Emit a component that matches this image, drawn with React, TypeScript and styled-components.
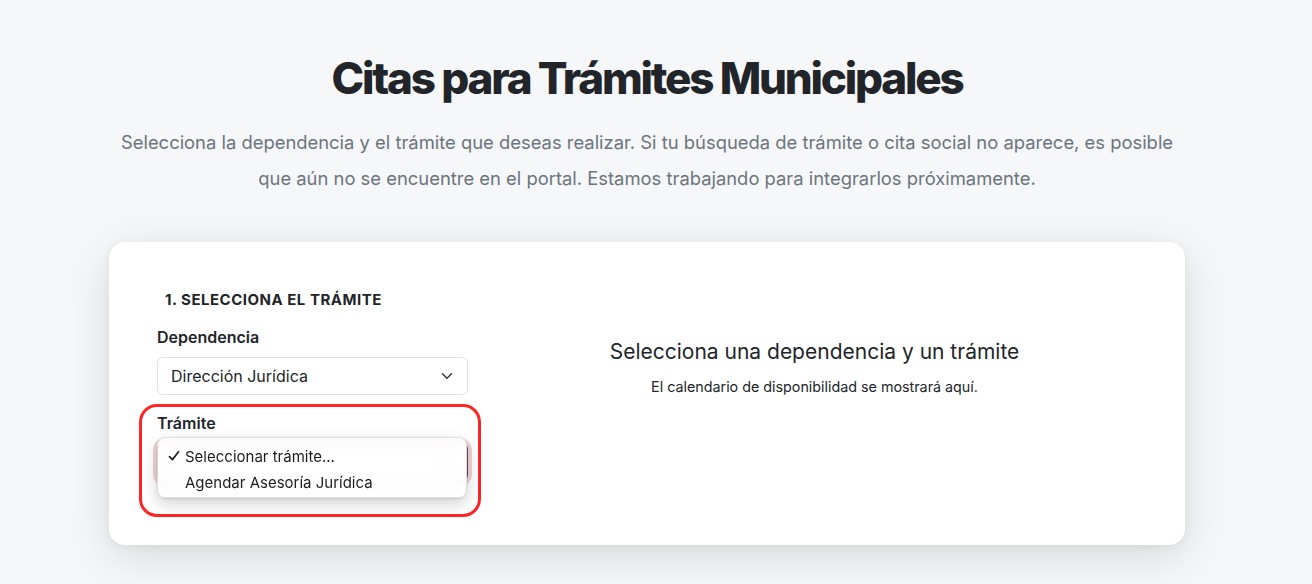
import React from "react";
import styled, { createGlobalStyle } from "styled-components";

const GlobalStyle = createGlobalStyle`
  html, body {
    margin: 0;
    padding: 0;
    background: #f6f7f9;
    font-family: Inter, "Noto Sans", "Liberation Sans", sans-serif;
    color: #212529;
  }
  * {
    box-sizing: border-box;
  }
`;

const Chevron: React.FC = () => (
  <svg width="16" height="12" viewBox="0 0 16 16" fill="none">
    <path
      d="m2 5 6 6 6-6"
      stroke="#343a40"
      strokeWidth="2"
      strokeLinecap="round"
      strokeLinejoin="round"
    />
  </svg>
);

const Check: React.FC = () => (
  <svg width="12" height="12" viewBox="0 0 12 12" fill="none">
    <path
      d="M1.5 6.6 4.4 9.6 10.6 1.8"
      stroke="#1d1d1f"
      strokeWidth="1.7"
      strokeLinecap="round"
      strokeLinejoin="round"
    />
  </svg>
);

const App: React.FC = () => {
  return (
    <Page>
      <GlobalStyle />
      <Title>Citas para Trámites Municipales</Title>
      <Lead>
        Selecciona la dependencia y el trámite que deseas realizar. Si tu
        búsqueda de trámite o cita social no aparece, es posible que aún no se
        encuentre en el portal. Estamos trabajando para integrarlos
        próximamente.
      </Lead>

      <Card>
        <FormCol>
          <StepTitle>1. Selecciona el trámite</StepTitle>
          <Field>
            <Label>Dependencia</Label>
            <Select>
              <span>Dirección Jurídica</span>
              <Chevron />
            </Select>
          </Field>
          <Field>
            <Label>Trámite</Label>
            <Select $focused>
              <Chevron />
            </Select>
            <Menu>
              <MenuItem>
                <CheckMark>
                  <Check />
                </CheckMark>
                Seleccionar trámite...
              </MenuItem>
              <MenuItem>Agendar Asesoría Jurídica</MenuItem>
            </Menu>
            <Highlight />
          </Field>
        </FormCol>

        <Placeholder>
          <PlaceholderTitle>Selecciona una dependencia y un trámite</PlaceholderTitle>
          <PlaceholderText>
            El calendario de disponibilidad se mostrará aquí.
          </PlaceholderText>
        </Placeholder>
      </Card>
    </Page>
  );
};

export default App;

// Styles
const Page = styled.div`
  min-height: 584px;
  padding: 52px 18px 40px 0;
  display: flex;
  flex-direction: column;
  align-items: center;
`;

const Title = styled.h1`
  margin: 0 0 19px;
  font-size: 44px;
  line-height: 53px;
  font-weight: 800;
  letter-spacing: -0.05em;
  color: #212529;
  text-align: center;
`;

const Lead = styled.p`
  margin: 0 0 46px;
  max-width: 1070px;
  font-size: 18.4px;
  line-height: 36px;
  font-weight: 400;
  color: #6c757d;
  text-align: center;
`;

const Card = styled.div`
  width: 1076px;
  background: #fff;
  border-radius: 16px;
  box-shadow: 0 12px 48px rgba(0, 0, 0, 0.12), 0 2px 10px rgba(0, 0, 0, 0.05);
  padding: 48px;
  display: flex;
  gap: 24px;
`;

const FormCol = styled.div`
  width: 311px;
  flex-shrink: 0;
  display: flex;
  flex-direction: column;
`;

const StepTitle = styled.h6`
  margin: 0 0 15px;
  padding-left: 8px;
  font-size: 15px;
  line-height: 20px;
  font-weight: 700;
  letter-spacing: 0.5px;
  text-transform: uppercase;
  color: #212529;
`;

const Field = styled.div`
  position: relative;
  margin-bottom: 16px;
`;

const Label = styled.div`
  margin-bottom: 8px;
  font-size: 16px;
  line-height: 24px;
  font-weight: 600;
  color: #212529;
`;

const Select = styled.div<{ $focused?: boolean }>`
  height: 38px;
  display: flex;
  align-items: center;
  justify-content: space-between;
  padding: 0 12px 0 13px;
  border: 1px solid ${({ $focused }) => ($focused ? "#7a4a4a" : "#dee2e6")};
  border-radius: 6px;
  font-size: 16px;
  color: #212529;
  background: #fff;
  box-shadow: ${({ $focused }) =>
    $focused ? "0 0 0 4px rgba(190, 60, 70, 0.22)" : "none"};

  svg {
    margin-left: auto;
  }
`;

const Menu = styled.div`
  position: absolute;
  top: 26px;
  left: 0;
  width: 310px;
  height: 61px;
  padding: 5px 0 4px;
  border-radius: 8px;
  border: 1px solid rgba(0, 0, 0, 0.13);
  background: rgba(255, 255, 255, 0.86);
  backdrop-filter: blur(7px);
  box-shadow: 0 6px 16px rgba(0, 0, 0, 0.18), 0 1px 3px rgba(0, 0, 0, 0.1);
`;

const MenuItem = styled.div`
  position: relative;
  height: 26px;
  display: flex;
  align-items: center;
  padding-left: 27px;
  font-size: 15px;
  color: #1d1d1f;
`;

const CheckMark = styled.span`
  position: absolute;
  left: 10px;
  top: 7px;
  display: flex;
`;

const Highlight = styled.div`
  position: absolute;
  top: -7px;
  left: -18px;
  width: 342px;
  height: 113px;
  border: 3.5px solid #ff2525;
  border-radius: 18px;
  pointer-events: none;
`;

const Placeholder = styled.div`
  flex: 1;
  padding-top: 50px;
  text-align: center;
`;

const PlaceholderTitle = styled.h5`
  margin: 0 0 12px;
  font-size: 21px;
  line-height: 24px;
  font-weight: 400;
  color: #212529;
`;

const PlaceholderText = styled.p`
  margin: 0;
  font-size: 14.3px;
  line-height: 21px;
  color: #212529;
`;
